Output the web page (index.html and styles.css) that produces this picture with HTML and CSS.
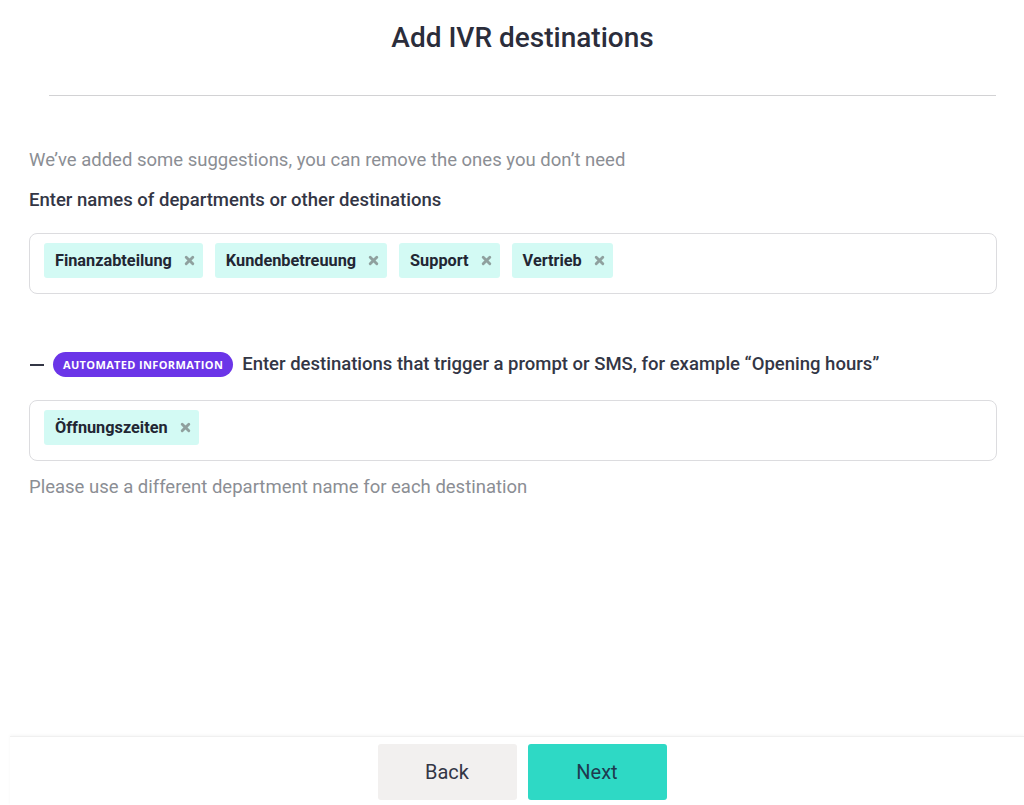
FILE: index.html
```html
<!DOCTYPE html>
<html lang="en">
<head>
  <meta charset="UTF-8">
  <meta name="viewport" content="width=device-width, initial-scale=1.0">
  <title>Add IVR destinations</title>
  <link rel="stylesheet" href="styles.css">
</head>
<body>
  <div class="header">
    <h1>Add IVR destinations</h1>
  </div>

  <div class="content">
    <p class="hint">We’ve added some suggestions, you can remove the ones you don’t need</p>
    <p class="label">Enter names of departments or other destinations</p>

    <div class="tag-box">
      <span class="tag">Finanzabteilung <svg class="remove" viewBox="0 0 10 10"><path d="M2 2 L8 8 M8 2 L2 8"/></svg></span>
      <span class="tag">Kundenbetreuung <svg class="remove" viewBox="0 0 10 10"><path d="M2 2 L8 8 M8 2 L2 8"/></svg></span>
      <span class="tag">Support <svg class="remove" viewBox="0 0 10 10"><path d="M2 2 L8 8 M8 2 L2 8"/></svg></span>
      <span class="tag">Vertrieb <svg class="remove" viewBox="0 0 10 10"><path d="M2 2 L8 8 M8 2 L2 8"/></svg></span>
    </div>

    <div class="auto-row">
      <span class="collapse"></span>
      <span class="badge">Automated information</span>
      <span class="auto-text">Enter destinations that trigger a prompt or SMS, for example “Opening hours”</span>
    </div>

    <div class="tag-box second">
      <span class="tag">Öffnungszeiten <svg class="remove" viewBox="0 0 10 10"><path d="M2 2 L8 8 M8 2 L2 8"/></svg></span>
    </div>

    <p class="hint small-gap">Please use a different department name for each destination</p>
  </div>

  <div class="footer">
    <button class="btn btn-back">Back</button>
    <button class="btn btn-next">Next</button>
  </div>
</body>
</html>
```

FILE: styles.css
```css
body {
  margin: 0;
  font-family: Roboto, "Liberation Sans", sans-serif;
  color: #333645;
  background: #fff;
  min-height: 100vh;
  display: flex;
  flex-direction: column;
}

.header {
  margin: 0 28px 0 49px;
  padding-top: 21px;
  height: 74px;
  border-bottom: 1px solid #d2d2d4;
  text-align: center;
}

h1 {
  margin: 0;
  font-size: 28px;
  line-height: 34px;
  font-weight: 500;
  color: #2b2d3b;
}

.content {
  padding: 0 27px 0 29px;
}

.hint {
  margin: 52px 0 0;
  font-size: 18.5px;
  line-height: 24px;
  color: #8b8e94;
}

.hint.small-gap {
  margin-top: 14px;
}

.label {
  margin: 16px 0 0;
  font-size: 18.5px;
  line-height: 24px;
  font-weight: 500;
}

.tag-box {
  margin-top: 21px;
  border: 1px solid #dcdcdf;
  border-radius: 8px;
  padding: 9px 14px 15px;
  display: flex;
  gap: 12px;
}

.tag-box.second {
  margin-top: 23px;
  padding-bottom: 15px;
}

.tag {
  display: inline-flex;
  align-items: center;
  height: 35px;
  padding: 0 8px 0 11px;
  background: #d3faf4;
  border-radius: 3px;
  font-size: 16.3px;
  font-weight: 700;
  color: #222633;
}

.remove {
  width: 11px;
  height: 11px;
  margin-left: 12px;
  fill: none;
  stroke: #8fa09e;
  stroke-width: 2.6;
  stroke-linecap: round;
}

.auto-row {
  margin-top: 57px;
  display: flex;
  align-items: center;
  height: 26px;
}

.collapse {
  width: 14px;
  height: 2px;
  background: #333645;
  margin: 2px 9px 0 1px;
}

.badge {
  background: #6b35e8;
  color: #fff;
  border-radius: 13px;
  height: 25px;
  line-height: 25px;
  padding: 0 10px;
  font-family: "Open Sans", sans-serif;
  font-size: 11px;
  font-weight: 700;
  letter-spacing: 0.35px;
  text-transform: uppercase;
}

.auto-text {
  margin-left: 9px;
  font-size: 18.5px;
  font-weight: 500;
}

.footer {
  margin-top: auto;
  margin-left: 10px;
  padding: 7px 0 5px 10px;
  display: flex;
  justify-content: center;
  gap: 11px;
  border-top: 1px solid #f0f0f0;
  box-shadow: 0 -1px 3px rgba(0, 0, 0, 0.04);
}

.btn {
  width: 139px;
  height: 56px;
  border: none;
  border-radius: 3px;
  font-family: Roboto, "Liberation Sans", sans-serif;
  font-size: 20px;
  cursor: pointer;
}

.btn-back {
  background: #f2f0ef;
  color: #333645;
}

.btn-next {
  background: #2ed9c5;
  color: #1f3a4f;
}
```
